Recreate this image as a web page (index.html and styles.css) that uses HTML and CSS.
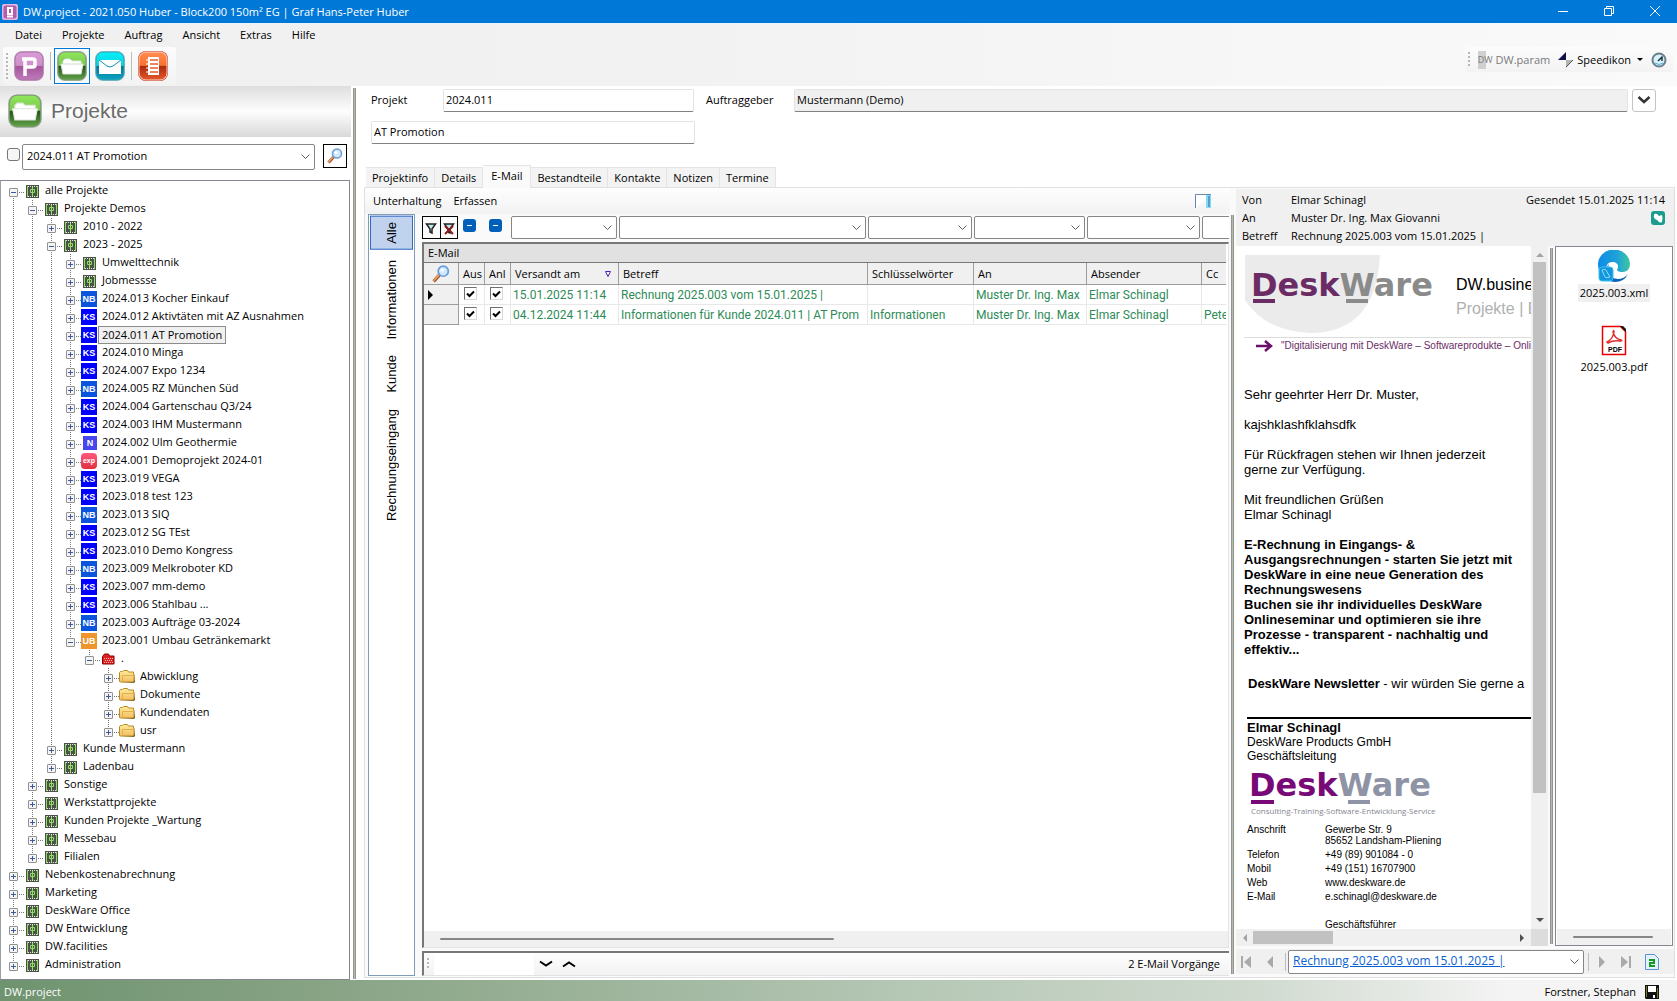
FILE: index.html
```html
<!DOCTYPE html>
<html lang="de">
<head>
<meta charset="utf-8">
<title>DW.project</title>
<link rel="stylesheet" href="styles.css">
</head>
<body>
<svg class="defs" aria-hidden="true">
  <defs>
    <linearGradient id="gGreen" x1="0" y1="0" x2="0" y2="1"><stop offset="0" stop-color="#8fe85a"/><stop offset=".48" stop-color="#7cc653"/><stop offset=".5" stop-color="#24501c"/><stop offset="1" stop-color="#62a548"/></linearGradient>
    <linearGradient id="gPink" x1="0" y1="0" x2="0" y2="1"><stop offset="0" stop-color="#d99bd6"/><stop offset=".48" stop-color="#cf8fcb"/><stop offset=".5" stop-color="#a3559c"/><stop offset="1" stop-color="#bf7ab9"/></linearGradient>
    <linearGradient id="gCyan" x1="0" y1="0" x2="0" y2="1"><stop offset="0" stop-color="#04f0f8"/><stop offset=".48" stop-color="#0cd4e4"/><stop offset=".5" stop-color="#04738f"/><stop offset="1" stop-color="#08a5c4"/></linearGradient>
    <linearGradient id="gOrange" x1="0" y1="0" x2="0" y2="1"><stop offset="0" stop-color="#ff8e50"/><stop offset=".48" stop-color="#f8702f"/><stop offset=".5" stop-color="#a82a0c"/><stop offset="1" stop-color="#e5592c"/></linearGradient>
    <linearGradient id="gFolder" x1="0" y1="0" x2="0" y2="1"><stop offset="0" stop-color="#fdeb9a"/><stop offset="1" stop-color="#f3bd63"/></linearGradient>
    <linearGradient id="gEdge" x1="0" y1="0" x2="1" y2="0"><stop offset="0" stop-color="#0c8be8"/><stop offset=".6" stop-color="#1fa3d8"/><stop offset="1" stop-color="#3fc6a0"/></linearGradient>
  </defs>
  <symbol id="bin" viewBox="0 0 16 16"><path fill="#4f4f4f" d="M2 2h13v13H2z"/><path fill="none" stroke="#d8f5c8" stroke-dasharray="1 1" d="M4 3.500h10M4 13.500h10"/><path fill="none" stroke="#8be35c" d="M3.500 3v11M13.500 3v11M8.500 4v9M6.500 6.500h4v3h-4z"/></symbol>
  <symbol id="folder" viewBox="0 0 16 16"><path fill="#5f4a14" d="M2 14h12.500l1.500-1V5l-1 8z"/><path fill="url(#gFolder)" stroke="#b98a22" d="M.5 12.500v-9l1-1h2l1-1h4l1 1.500h5v2h.5v7l-1 1H1.500z"/><path stroke="#e0b04a" fill="none" d="M3.500 12V6.500h11"/></symbol>
  <symbol id="redfolder" viewBox="0 0 16 16"><path fill="#e02020" stroke="#8c0000" d="M2.500 13V5.500L4.500 3h4l1 2h4.500v8z"/><path stroke="#fbb" stroke-dasharray="1 1" d="M4 7.500h9M5 9.500h8M4 11.500h9"/></symbol>
  <symbol id="appfolder" viewBox="0 0 32 32"><rect x="1" y="1" width="30" height="30" rx="8" fill="#b5bdb2"/><rect x="2" y="2" width="28" height="28" rx="7" fill="url(#gGreen)" stroke="#7d9a74"/><path fill="#fff" d="M7 13v-2l2-2h5l2 2h9v3H8zM5 14h22l-2 10H7z" stroke="#dfe8dc"/></symbol>
  <symbol id="lens" viewBox="0 0 16 16"><path d="M1.500 14.500l5-5.500" stroke="#a0502a" stroke-width="3"/><path d="M1.500 14l4.500-5" stroke="#f0a55a" stroke-width="1.500"/><circle cx="10" cy="5.500" r="4.500" fill="#cfeafd" stroke="#6b9bd8" stroke-width="1.500"/><circle cx="9" cy="4.500" r="1.500" fill="#fff"/></symbol>
</svg>

<header class="titlebar">
  <svg class="appicon" viewBox="0 0 16 16"><rect width="16" height="16" rx="2" fill="#e3b7e0"/><rect x="1.500" y="1.500" width="13" height="13" rx="2" fill="#b25fab"/><path fill="none" stroke="#fff" stroke-width="2" d="M6 4h4v6H6zM5 12.500h6"/></svg>
  <h1>DW.project - 2021.050 Huber - Block200 150m² EG | Graf Hans-Peter Huber</h1>
  <div class="winbtns">
    <button aria-label="Minimieren"><svg viewBox="0 0 10 10"><path d="M0 5.500h10"/></svg></button>
    <button aria-label="Wiederherstellen"><svg viewBox="0 0 10 10"><path d="M.5 2.500h7v7h-7zM2.500 2.500v-2h7v7h-2"/></svg></button>
    <button aria-label="Schließen"><svg viewBox="0 0 10 10"><path d="M0 0l10 10M10 0L0 10"/></svg></button>
  </div>
</header>

<div class="topbars">
  <nav class="menu"><button>Datei</button><button>Projekte</button><button>Auftrag</button><button>Ansicht</button><button>Extras</button><button>Hilfe</button></nav>
  <div class="toolrow">
    <div class="strip">
      <i class="grip"></i>
      <button class="tool" aria-label="Projekt"><svg viewBox="0 0 32 32"><rect x="1" y="1" width="30" height="30" rx="8" fill="#cbb4ca"/><rect x="2" y="2" width="28" height="28" rx="7" fill="url(#gPink)" stroke="#a873a4"/><path fill="none" stroke="#fff" stroke-width="3.500" d="M9 9h11q2 0 2 2v4q0 2-2 2h-7M12 8v18"/></svg></button>
      <i class="sep"></i>
      <button class="tool on" aria-label="Projekte"><svg><use href="#appfolder"/></svg></button>
      <button class="tool" aria-label="E-Mail"><svg viewBox="0 0 32 32"><rect x="1" y="1" width="30" height="30" rx="8" fill="#a7c8cf"/><rect x="2" y="2" width="28" height="28" rx="7" fill="url(#gCyan)" stroke="#3da0b0"/><path fill="#fff" d="M5 10h22v14H5z"/><path fill="none" stroke="#0a93ab" d="M5 10l8 6q3 2 6 0l8-6"/></svg></button>
      <i class="sep"></i>
      <button class="tool" aria-label="Liste"><svg viewBox="0 0 32 32"><rect x="1" y="1" width="30" height="30" rx="8" fill="#c0392b"/><rect x="2" y="2" width="28" height="28" rx="7" fill="url(#gOrange)" stroke="#ffd5c4"/><path fill="#fff" d="M11 7h11v18H11z"/><path stroke="#e5592c" stroke-width="1.500" d="M13 10h8M13 14h8M13 18h8M13 22h8"/><path stroke="#fff" d="M9 10h3M9 14h3M9 18h3M9 22h3"/></svg></button>
    </div>
    <div class="strip right">
      <i class="grip"></i>
      <button class="txt dim"><b class="dwmini">DW</b>DW.param</button>
      <button class="txt"><svg viewBox="0 0 16 16"><path fill="#10104a" d="M0 8L8 0v8z"/><path fill="#b5b5b5" d="M8 8h7l-7 8z"/><path stroke="#555" d="M15 8l-7 7"/></svg>Speedikon<i class="caret"></i></button>
      <button class="txt" aria-label="Uhr"><svg viewBox="0 0 16 16"><circle cx="8" cy="8" r="6.500" fill="#d9f1fb" stroke="#6c7f8c" stroke-width="2"/><path stroke="#234" stroke-width="1.500" fill="none" d="M7 9l4.500-4.500M11 5v4"/><path stroke="#4ab4dc" d="M4 11q4 3 8 0" fill="none"/></svg></button>
    </div>
  </div>
</div>

<div class="body">
<aside class="side">
  <div class="sidehead"><svg><use href="#appfolder"/></svg><h2>Projekte</h2></div>
  <div class="search">
    <input type="checkbox" aria-label="Filter aktiv">
    <select aria-label="Projekt wählen"><option>2024.011 AT Promotion</option></select>
    <button class="boxbtn" aria-label="Suchen"><svg><use href="#lens"/></svg></button>
  </div>
  <ul class="tree">
    <li><div class="row"><button class="tg open" aria-label="Zuklappen"></button><svg><use href="#bin"/></svg><span>alle Projekte</span></div>
      <ul>
        <li><div class="row"><button class="tg open" aria-label="Zuklappen"></button><svg><use href="#bin"/></svg><span>Projekte Demos</span></div>
          <ul>
            <li><div class="row"><button class="tg" aria-label="Aufklappen"></button><svg><use href="#bin"/></svg><span>2010 - 2022</span></div></li>
            <li><div class="row"><button class="tg open" aria-label="Zuklappen"></button><svg><use href="#bin"/></svg><span>2023 - 2025</span></div>
              <ul>
                <li><div class="row"><button class="tg" aria-label="Aufklappen"></button><svg><use href="#bin"/></svg><span>Umwelttechnik</span></div></li>
                <li><div class="row"><button class="tg" aria-label="Aufklappen"></button><svg><use href="#bin"/></svg><span>Jobmessse</span></div></li>
                <li><div class="row"><button class="tg" aria-label="Aufklappen"></button><b class="nb">NB</b><span>2024.013 Kocher Einkauf</span></div></li>
                <li><div class="row"><button class="tg" aria-label="Aufklappen"></button><b class="ks">KS</b><span>2024.012 Aktivtäten mit AZ Ausnahmen</span></div></li>
                <li><div class="row"><button class="tg" aria-label="Aufklappen"></button><b class="ks">KS</b><span class="sel">2024.011 AT Promotion</span></div></li>
                <li><div class="row"><button class="tg" aria-label="Aufklappen"></button><b class="ks">KS</b><span>2024.010 Minga</span></div></li>
                <li><div class="row"><button class="tg" aria-label="Aufklappen"></button><b class="ks">KS</b><span>2024.007 Expo 1234</span></div></li>
                <li><div class="row"><button class="tg" aria-label="Aufklappen"></button><b class="nb">NB</b><span>2024.005 RZ München Süd</span></div></li>
                <li><div class="row"><button class="tg" aria-label="Aufklappen"></button><b class="ks">KS</b><span>2024.004 Gartenschau Q3/24</span></div></li>
                <li><div class="row"><button class="tg" aria-label="Aufklappen"></button><b class="ks">KS</b><span>2024.003 IHM Mustermann</span></div></li>
                <li><div class="row"><button class="tg" aria-label="Aufklappen"></button><b class="n">N</b><span>2024.002 Ulm Geothermie</span></div></li>
                <li><div class="row"><button class="tg" aria-label="Aufklappen"></button><b class="exp">exp</b><span>2024.001 Demoprojekt 2024-01</span></div></li>
                <li><div class="row"><button class="tg" aria-label="Aufklappen"></button><b class="ks">KS</b><span>2023.019 VEGA</span></div></li>
                <li><div class="row"><button class="tg" aria-label="Aufklappen"></button><b class="ks">KS</b><span>2023.018 test 123</span></div></li>
                <li><div class="row"><button class="tg" aria-label="Aufklappen"></button><b class="nb">NB</b><span>2023.013 SIQ</span></div></li>
                <li><div class="row"><button class="tg" aria-label="Aufklappen"></button><b class="ks">KS</b><span>2023.012 SG TEst</span></div></li>
                <li><div class="row"><button class="tg" aria-label="Aufklappen"></button><b class="ks">KS</b><span>2023.010 Demo Kongress</span></div></li>
                <li><div class="row"><button class="tg" aria-label="Aufklappen"></button><b class="nb">NB</b><span>2023.009 Melkroboter KD</span></div></li>
                <li><div class="row"><button class="tg" aria-label="Aufklappen"></button><b class="ks">KS</b><span>2023.007 mm-demo</span></div></li>
                <li><div class="row"><button class="tg" aria-label="Aufklappen"></button><b class="ks">KS</b><span>2023.006 Stahlbau ...</span></div></li>
                <li><div class="row"><button class="tg" aria-label="Aufklappen"></button><b class="nb">NB</b><span>2023.003 Aufträge 03-2024</span></div></li>
                <li><div class="row"><button class="tg open" aria-label="Zuklappen"></button><b class="ub">UB</b><span>2023.001 Umbau Getränkemarkt</span></div>
                  <ul>
                    <li><div class="row"><button class="tg open" aria-label="Zuklappen"></button><svg><use href="#redfolder"/></svg><span>.</span></div>
                      <ul>
                        <li><div class="row"><button class="tg" aria-label="Aufklappen"></button><svg><use href="#folder"/></svg><span>Abwicklung</span></div></li>
                        <li><div class="row"><button class="tg" aria-label="Aufklappen"></button><svg><use href="#folder"/></svg><span>Dokumente</span></div></li>
                        <li><div class="row"><button class="tg" aria-label="Aufklappen"></button><svg><use href="#folder"/></svg><span>Kundendaten</span></div></li>
                        <li><div class="row"><button class="tg" aria-label="Aufklappen"></button><svg><use href="#folder"/></svg><span>usr</span></div></li>
                      </ul>
                    </li>
                  </ul>
                </li>
              </ul>
            </li>
            <li><div class="row"><button class="tg" aria-label="Aufklappen"></button><svg><use href="#bin"/></svg><span>Kunde Mustermann</span></div></li>
            <li><div class="row"><button class="tg" aria-label="Aufklappen"></button><svg><use href="#bin"/></svg><span>Ladenbau</span></div></li>
          </ul>
        </li>
        <li><div class="row"><button class="tg" aria-label="Aufklappen"></button><svg><use href="#bin"/></svg><span>Sonstige</span></div></li>
        <li><div class="row"><button class="tg" aria-label="Aufklappen"></button><svg><use href="#bin"/></svg><span>Werkstattprojekte</span></div></li>
        <li><div class="row"><button class="tg" aria-label="Aufklappen"></button><svg><use href="#bin"/></svg><span>Kunden Projekte _Wartung</span></div></li>
        <li><div class="row"><button class="tg" aria-label="Aufklappen"></button><svg><use href="#bin"/></svg><span>Messebau</span></div></li>
        <li><div class="row"><button class="tg" aria-label="Aufklappen"></button><svg><use href="#bin"/></svg><span>Filialen</span></div></li>
      </ul>
    </li>
    <li><div class="row"><button class="tg" aria-label="Aufklappen"></button><svg><use href="#bin"/></svg><span>Nebenkostenabrechnung</span></div></li>
    <li><div class="row"><button class="tg" aria-label="Aufklappen"></button><svg><use href="#bin"/></svg><span>Marketing</span></div></li>
    <li><div class="row"><button class="tg" aria-label="Aufklappen"></button><svg><use href="#bin"/></svg><span>DeskWare Office</span></div></li>
    <li><div class="row"><button class="tg" aria-label="Aufklappen"></button><svg><use href="#bin"/></svg><span>DW Entwicklung</span></div></li>
    <li><div class="row"><button class="tg" aria-label="Aufklappen"></button><svg><use href="#bin"/></svg><span>DW.facilities</span></div></li>
    <li><div class="row"><button class="tg" aria-label="Aufklappen"></button><svg><use href="#bin"/></svg><span>Administration</span></div></li>
  </ul>
</aside>
<div class="split"></div>

<main class="main">
  <div class="fields">
    <label for="prj">Projekt</label><input id="prj" class="field no" value="2024.011">
    <label for="auf" class="lauf">Auftraggeber</label><input id="auf" class="field wide" value="Mustermann (Demo)" readonly>
    <button class="drop" aria-label="Mehr"><svg viewBox="0 0 14 10"><path d="M1.500 2l5.500 5 5.500-5" fill="none" stroke="#333" stroke-width="2.500"/></svg></button>
  </div>
  <div class="fields second"><input class="field name" aria-label="Projektname" value="AT Promotion"></div>
  <div class="tabs"><button>Projektinfo</button><button>Details</button><button class="on">E-Mail</button><button>Bestandteile</button><button>Kontakte</button><button>Notizen</button><button>Termine</button></div>

  <div class="panel">
    <section class="work">
      <div class="wbar"><button>Unterhaltung</button><button>Erfassen</button>
        <button class="layout" aria-label="Vorschau"><svg viewBox="0 0 16 14"><path fill="#fff" stroke="#6787ad" d="M.5 14V.5H16"/><path fill="#7fdcf4" d="M11 1h5v13h-5z"/><path fill="#5b9ccc" d="M13 2h2v11h-2z"/></svg></button>
      </div>
      <div class="wbody">
        <div class="vtabs"><button class="on">Alle</button><button>Informationen</button><button>Kunde</button><button>Rechnungseingang</button></div>
        <div class="list">
          <div class="filters">
            <div class="fbtns">
              <button aria-label="Filtern"><svg viewBox="0 0 12 14"><path d="M1.500 3h9L7 8v4l-2-1V8z" fill="#bfeaea" stroke="#222" stroke-width="1.500"/></svg></button>
              <button aria-label="Filter löschen"><svg viewBox="0 0 12 14"><path d="M1.500 3h9L7 8v4l-2-1V8z" fill="#bfeaea" stroke="#222" stroke-width="1.500"/><path d="M2 5l8 8M10 5l-8 8" stroke="#8b1a1a" stroke-width="2"/></svg></button>
            </div>
            <button class="tri" aria-label="Ausgang"></button><button class="tri" aria-label="Anlage"></button>
            <select aria-label="Versandt am"></select><select aria-label="Betreff"></select><select aria-label="Schlüsselwörter"></select><select aria-label="An"></select><select aria-label="Absender"></select><select aria-label="Cc"></select>
          </div>
          <div class="grid">
            <table>
              <caption>E-Mail</caption>
              <colgroup><col class="c0"><col class="c1"><col class="c1"><col class="c3"><col class="c4"><col class="c5"><col class="c6"><col class="c7"><col class="c8"></colgroup>
              <thead><tr><th class="find"><svg><use href="#lens"/></svg></th><th>Aus</th><th>Anl</th><th>Versandt am<svg class="sort" viewBox="0 0 6 8"><path d="M.5 1.500h5L3 6.500z" fill="#fff" stroke="#4b1fa8"/></svg></th><th>Betreff</th><th>Schlüsselwörter</th><th>An</th><th>Absender</th><th>Cc</th></tr></thead>
              <tbody>
                <tr><th><i class="cur"></i></th><td class="ck"><input type="checkbox" checked aria-label="Ausgang"></td><td class="ck"><input type="checkbox" checked aria-label="Anlage"></td><td>15.01.2025 11:14</td><td>Rechnung 2025.003 vom 15.01.2025 |</td><td></td><td>Muster Dr. Ing. Max</td><td>Elmar Schinagl</td><td></td></tr>
                <tr><th></th><td class="ck"><input type="checkbox" checked aria-label="Ausgang"></td><td class="ck"><input type="checkbox" checked aria-label="Anlage"></td><td>04.12.2024 11:44</td><td>Informationen für Kunde 2024.011 | AT Prom</td><td>Informationen</td><td>Muster Dr. Ing. Max</td><td>Elmar Schinagl</td><td>Pete</td></tr>
              </tbody>
            </table>
            <div class="thinbar"><i></i></div>
          </div>
          <div class="lfoot">
            <i class="grip"></i><input aria-label="Suchen">
            <button aria-label="Weiter"><svg viewBox="0 0 14 8"><path d="M1 1.500l6 4 6-4"/></svg></button>
            <button aria-label="Zurück"><svg viewBox="0 0 14 8"><path d="M1 6.500l6-4 6 4"/></svg></button>
            <output>2 E-Mail Vorgänge</output>
          </div>
        </div>
      </div>
    </section>
    <div class="split"></div>

    <section class="preview">
      <dl class="mhead">
        <div><dt>Von</dt><dd>Elmar Schinagl</dd><dd class="end">Gesendet 15.01.2025 11:14</dd></div>
        <div><dt>An</dt><dd>Muster Dr. Ing. Max Giovanni</dd><dd class="end"><svg viewBox="0 0 14 14"><rect width="14" height="14" rx="3" fill="#1b9c8e"/><path fill="#fff" d="M3 4q0-2 3-1l2 2 3-1q1 3 0 7-2 1-3 0L6 9 4 8Q2 6 3 4z"/></svg></dd></div>
        <div><dt>Betreff</dt><dd>Rechnung 2025.003 vom 15.01.2025 |</dd></div>
      </dl>
      <div class="pbody">
        <div class="browser">
          <article class="mail">
            <div class="banner">
              <svg class="brand" viewBox="0 0 190 80"><path fill="#ebebeb" d="M0 0h135q-4 78-70 78Q20 76 0 45z"/><text x="6" y="41" class="lt"><tspan fill="#6b2c66">Desk</tspan><tspan fill="#8a8a8a">Ware</tspan></text><path fill="#6b2c66" d="M8 44h22v4H8z"/><path fill="#8a8a8a" d="M101 44h22v4h-22z"/></svg>
              <div class="claim"><p>DW.busine</p><p class="dim">Projekte | B</p></div>
            </div>
            <p class="slogan"><svg viewBox="0 0 18 12"><path d="M1 6h14M10 1l6 5-6 5" fill="none" stroke="#6b0f6b" stroke-width="2.500"/></svg>"Digitalisierung mit DeskWare – Softwareprodukte – Onlin</p>
            <p>Sehr geehrter Herr Dr. Muster,</p>
            <p>kajshklashfklahsdfk</p>
            <p>Für Rückfragen stehen wir Ihnen jederzeit<br>gerne zur Verfügung.</p>
            <p>Mit freundlichen Grüßen<br>Elmar Schinagl</p>
            <p><b>E-Rechnung in Eingangs- &amp;<br>Ausgangsrechnungen - starten Sie jetzt mit<br>DeskWare in eine neue Generation des<br>Rechnungswesens<br>Buchen sie ihr individuelles DeskWare<br>Onlineseminar und optimieren sie ihre<br>Prozesse - transparent - nachhaltig und<br>effektiv...</b></p>
            <p class="news"><b>DeskWare Newsletter</b> - wir würden Sie gerne a</p>
            <div class="sign">
              <b>Elmar Schinagl</b>
              <span>DeskWare Products GmbH</span>
              <span>Geschäftsleitung</span>
              <svg class="brand2" viewBox="0 0 190 50"><text x="2" y="26" class="lt"><tspan fill="#780a78">Desk</tspan><tspan fill="#8f93a6">Ware</tspan></text><path fill="#780a78" d="M4 30h23v4H4z"/><path fill="#8f93a6" d="M101 30h22v4h-22z"/><text x="4" y="44" class="tag">Consulting-Training-Software-Entwicklung-Service</text></svg>
              <dl>
                <dt>Anschrift</dt><dd>Gewerbe Str. 9<br>85652 Landsham-Pliening</dd>
                <dt>Telefon</dt><dd>+49 (89) 901084 - 0</dd>
                <dt>Mobil</dt><dd>+49 (151) 16707900</dd>
                <dt>Web</dt><dd>www.deskware.de</dd>
                <dt>E-Mail</dt><dd>e.schinagl@deskware.de</dd>
                <dd class="gf">Geschäftsführer</dd>
              </dl>
            </div>
          </article>
          <div class="vbar"><i class="up"></i><i class="thumb"></i><i class="down"></i></div>
          <div class="hbar"><i class="left"></i><i class="thumb"></i><i class="rgt"></i></div>
          <div class="corner"></div>
        </div>
        <div class="split"></div>
        <div class="files">
          <a href="#xml"><svg viewBox="0 0 32 32"><path fill="url(#gEdge)" d="M0 15A16 15 0 0 1 32 14q0 7-7 8-5 0-6-2 3-6-3-8-8-1-8 8 1 8 9 12Q1 31 0 15z"/><path fill="#0d62b8" d="M11 14q-5 14 9 15 6 0 10-5-4 8-13 8-9-1-9-10 0-5 3-8z"/><rect x="1" y="17" width="14" height="14" rx="3" fill="#1496dc" stroke="#39c0f0"/><path fill="none" stroke="#8be0ff" d="M4 20q4-2 5 2l3 5q-5 2-6-2z"/></svg><span class="on">2025.003.xml</span></a>
          <a href="#pdf"><svg viewBox="0 0 32 32"><path fill="#fff" stroke="#e60000" stroke-width="1.500" d="M4.500 2.500h18l5 5v23h-23z"/><path fill="#111" d="M22 2l6 6v-3l-3-3z"/><path fill="none" stroke="#e03030" stroke-width="1.500" d="M9 18q6-3 7-10 0-3-1 0 2 7 8 8 2 1-1 1-7-1-12 2z"/><text x="10" y="28" class="pdf">PDF</text></svg><span>2025.003.pdf</span></a>
          <div class="thinbar"><i></i></div>
        </div>
      </div>
      <div class="pnav">
        <button aria-label="Erste"><svg viewBox="0 0 10 12"><path d="M0 0h2v12H0zM10 0v12L3 6z"/></svg></button>
        <button aria-label="Vorige"><svg viewBox="0 0 10 12"><path d="M8 0v12L2 6z"/></svg></button>
        <i class="sep"></i>
        <select aria-label="Nachricht"><option>Rechnung 2025.003 vom 15.01.2025 |</option></select>
        <i class="sep"></i>
        <button aria-label="Nächste"><svg viewBox="0 0 10 12"><path d="M2 0v12l6-6z"/></svg></button>
        <button aria-label="Letzte"><svg viewBox="0 0 10 12"><path d="M0 0v12l7-6zM8 0h2v12H8z"/></svg></button>
        <button class="reload" aria-label="Aktualisieren"><svg viewBox="0 0 14 16"><path fill="#e4f1fd" stroke="#5b93d8" d="M.5.5h9l4 4v11H.5z"/><path fill="none" stroke="#159a1f" stroke-width="2" d="M4 6h5v3H5v3h5"/></svg></button>
      </div>
    </section>
  </div>
</main>
</div>

<footer class="status"><span>DW.project</span><span class="user">Forstner, Stephan</span><svg viewBox="0 0 14 14"><path fill="#111" d="M0 0h14v14H1l-1-1z"/><path fill="#fff" d="M3 1h8v6H3zM8 10h2v3H8z"/><path fill="#7a7a20" d="M1 1h1v11H1zM12 3h1v10h-1z"/></svg></footer>
</body>
</html>
```
FILE: styles.css
```css
* { box-sizing: border-box; }
body {
  margin: 0;
  height: 100vh;
  display: flex;
  flex-direction: column;
  overflow: hidden;
  background: #fff;
  color: #000;
  font: 11px/18px "Open Sans", "Noto Sans", sans-serif;
}
button, input, select { font: inherit; color: inherit; margin: 0; }
button { border: 0; background: none; padding: 0; white-space: nowrap; }
h1, h2, p, ul, dl, dd { margin: 0; padding: 0; font-weight: normal; }
ul { list-style: none; }
svg { display: block; flex: none; }
.defs { position: absolute; width: 0; height: 0; }

select {
  appearance: none;
  min-width: 0;
  border: 1px solid #868686;
  border-radius: 2px;
  padding: 0 20px 2px 4px;
  background: #fff url("data:image/svg+xml,%3Csvg xmlns='http://www.w3.org/2000/svg' width='9' height='6'%3E%3Cpath d='M.5.5l4 4 4-4' fill='none' stroke='%23606060'/%3E%3C/svg%3E") no-repeat right 4px center;
}
.split {
  flex: none;
  width: 3px;
  margin: 2px 2px 4px;
  background: #b4bab0;
  border: solid #90958e;
  border-width: 0 1px;
}
.grip {
  width: 2px;
  height: 26px;
  background: repeating-linear-gradient(#b8b8b8 0 2px, transparent 2px 4px);
}
.sep { width: 1px; height: 28px; background: #bdbdbd; }

/* title bar */
.titlebar {
  flex: none;
  display: flex;
  align-items: center;
  height: 23px;
  padding-left: 2px;
  gap: 5px;
  background: #0078d7;
  color: #fff;
}
.titlebar h1 { font-size: 11px; flex: 1; }
.appicon { width: 16px; height: 16px; }
.winbtns { display: flex; margin-right: -1px; }
.winbtns button { width: 46px; height: 23px; padding-bottom: 2px; display: grid; place-items: center; }
.winbtns svg { width: 10px; height: 10px; fill: none; stroke: #fff; overflow: visible; }

/* menu and toolbars */
.topbars {
  flex: none;
  height: 63px;
  background: linear-gradient(90deg, #f0f0f0, #f2f2f2 40%, #fafafa);
}
.menu { display: flex; height: 24px; padding-left: 15px; gap: 20px; }
.toolrow { display: flex; justify-content: space-between; align-items: flex-start; padding: 0 4px 0 3px; }
.strip {
  display: flex;
  align-items: center;
  gap: 4px;
  height: 38px;
  padding: 0 6px 0 3px;
  border-radius: 3px;
  background: linear-gradient(#fcfcfc, #f3f3f3);
}
.tool { width: 36px; height: 36px; display: grid; place-items: center; border: 1px solid transparent; margin: 0 -1px; }
.tool.on { border-color: #0078d7; background: #f7fbff; }
.tool svg { width: 32px; height: 32px; }
.strip.right { height: 25px; gap: 8px; }
.strip.right .grip { height: 15px; }
.txt { display: flex; align-items: center; gap: 3px; }
.txt svg { width: 16px; height: 16px; }
.dim { color: #7a7a7a; }
.dwmini { font-size: 9px; font-weight: normal; background: linear-gradient(90deg, #d0d0d0 50%, transparent 50%); }
.caret { border: 3px solid transparent; border-top-color: #000; border-bottom: 0; margin-left: 3px; }

.body { flex: 1; min-height: 0; display: flex; }

/* project tree */
.side { width: 351px; flex: none; display: flex; flex-direction: column; }
.sidehead {
  flex: none;
  display: flex;
  align-items: center;
  gap: 8px;
  height: 51px;
  padding: 0 0 2px 7px;
  background: linear-gradient(#dedede, #fdfdfd 50%, #d9d9d9);
}
.sidehead svg { width: 36px; height: 36px; }
.sidehead h2 { font: 21px/24px "Liberation Sans", Arial, sans-serif; color: #6b6b6b; }
.search { display: flex; align-items: flex-start; padding: 7px 4px 10px 7px; }
.search input { appearance: none; width: 13px; height: 13px; margin: 4px 2px 0 0; border: 1px solid #767676; border-radius: 3px; background: #f6f6f6; }
.search select { flex: 1; height: 26px; margin-right: 8px; }
.boxbtn { width: 24px; height: 24px; display: grid; place-items: center; border: 1px solid #000; }
.boxbtn svg { width: 16px; height: 16px; }
.tree {
  flex: 1;
  min-height: 0;
  overflow: hidden;
  margin-right: 1px;
  padding-top: 1px;
  border: 1px solid #828790;
  border-left-color: #9a9ea6;
}
.tree ul { margin-left: 19px; }
.tree li {
  background: repeating-linear-gradient(#777 0 1px, transparent 1px 2px) 12px 0 / 1px 100% no-repeat;
}
.tree li:last-child { background-size: 1px 10px; }
.tree > li:first-child { background-position: 12px 10px; }
.row {
  display: flex;
  align-items: center;
  height: 18px;
  padding-left: 8px;
  background: repeating-linear-gradient(90deg, #777 0 1px, transparent 1px 2px) 18px 10px / 6px 1px no-repeat;
}
.tg {
  flex: none;
  width: 9px;
  height: 9px;
  margin: 3px 6px 0 0;
  border: 1px solid #919191;
  border-radius: 1px;
  background:
    linear-gradient(#3c5a9c, #3c5a9c) center / 5px 1px no-repeat,
    linear-gradient(#3c5a9c, #3c5a9c) center / 1px 5px no-repeat,
    #f4f4f4;
}
.tg.open { background: linear-gradient(#3c5a9c, #3c5a9c) center / 5px 1px no-repeat, #f4f4f4; }
.row svg, .row b { width: 16px; height: 16px; }
.row b { flex: none; color: #fff; font: bold 9px/17px "Liberation Sans", Arial, sans-serif; text-align: center; }
.nb { background: #0a55dc; }
.ks { background: #0000ff; }
.row .n { width: 14px; height: 14px; margin: 0 0 0 2px; line-height: 15px; background: #4646ec; }
.row .exp { background: linear-gradient(#ff5a80, #e03040); border-radius: 4px; font-size: 7px; line-height: 15px; }
.ub { background: #ee962c; }
.row span { padding: 0 3px; margin-left: 1px; line-height: 16px; border: 1px solid transparent; margin-top: -2px; white-space: nowrap; }
.row .sel { border-color: #8c8c8c; background: #f0f0f0; margin-top: 0; }

/* main area */
.main { flex: 1; min-width: 0; display: flex; flex-direction: column; padding: 2px 2px 2px 5px; }
.body > .split { margin-bottom: 1px; }
.fields { display: flex; align-items: center; height: 24px; padding: 0 19px 0 8px; }
.fields.second { margin-top: 7px; margin-bottom: 19px; height: 26px; }
.fields label { width: 72px; }
.fields .lauf { width: 88px; margin-left: 12px; }
.field { height: 23px; border: 1px solid #e3e3e3; border-bottom-color: #808080; border-radius: 2px; padding: 0 2px 2px; background: #fff; }
.no { width: 251px; }
.name { width: 324px; }
.wide { flex: 1; min-width: 0; background: #f0f0f0; }
.drop { width: 24px; height: 23px; margin-left: 4px; display: grid; place-items: center; border: 1px solid #c4c4c4; border-radius: 3px; }
.drop svg { width: 14px; height: 10px; }
.tabs { display: flex; align-items: flex-end; padding-left: 3px; height: 23px; }
.tabs button { height: 20px; padding: 0 6px; line-height: 20px; background: #f3f3f3; border: 1px solid #e4e4e4; border-width: 1px 1px 0 0; }
.tabs .on { height: 23px; line-height: 18px; padding: 0 8px 3px; background: #fafafa; margin-bottom: -1px; position: relative; }
.panel { flex: 1; min-height: 0; display: flex; border: 1px solid #e0e0e0; margin-left: 1px; background: #fafafa; }
.work { flex: 1; min-width: 0; display: flex; flex-direction: column; }
.wbar { flex: none; display: flex; gap: 12px; height: 26px; padding: 0 19px 0 8px; align-items: center; background: linear-gradient(#fefefe, #f2f2f2); }
.layout { margin-left: auto; }
.layout svg { width: 16px; height: 14px; }
.wbody { flex: 1; min-height: 0; display: flex; padding: 0 1px 1px 3px; gap: 7px; }
.vtabs { width: 47px; flex: none; padding: 1px; display: flex; flex-direction: column; gap: 4px; border: 1px solid #7f9db9; background: #fff; }
.vtabs button { writing-mode: vertical-rl; transform: rotate(180deg); padding: 6px 0; width: 43px; font: 13px/43px "Liberation Sans", Arial, sans-serif; border: 0 solid #316ac5; }
.vtabs .on { background: #c1d2ee; border-width: 1px; padding: 5px 0; line-height: 41px; }
.list { flex: 1; min-width: 0; display: flex; flex-direction: column; gap: 2px; }
.filters {
  flex: none;
  display: grid;
  grid-template-columns: 36px 24px 23px 106px 247px 104px 111px 113px 110px;
  column-gap: 2px;
  height: 26px;
  padding-top: 2px;
  overflow: hidden;
}
.filters .tri { margin: 3px 0 0 3px; width: 13px; height: 13px; border-radius: 3px; background: linear-gradient(#fff, #fff) center / 5px 1px no-repeat #005fb8; }
.filters select { height: 23px; }
.fbtns { display: flex; height: 23px; }
.fbtns button { flex: 1; border: 1px solid #000; display: grid; place-items: center; }
.fbtns button + button { border-left: 0; }
.fbtns svg { width: 12px; height: 14px; }

/* e-mail grid */
.grid { flex: 1; min-height: 0; display: flex; flex-direction: column; justify-content: space-between; overflow: hidden; background: #fff; border: 2px solid #777; border-width: 2px 1px 1px 2px; border-right-color: #e3e3e3; border-bottom-color: #e3e3e3; }
table { table-layout: fixed; width: 802px; border-collapse: separate; border-spacing: 0; }
.c0 { width: 35px; } .c1 { width: 26px; } .c3 { width: 108px; } .c4 { width: 249px; }
.c5 { width: 106px; } .c6 { width: 113px; } .c7 { width: 115px; } .c8 { width: 24px; }
caption { height: 19px; padding-left: 4px; text-align: left; background: #e1e1e1; border-bottom: 1px solid #777; }
thead th { height: 22px; padding: 0 0 0 4px; font-weight: normal; text-align: left; white-space: nowrap; overflow: hidden; background: #f0f0f0; border: solid #9d9d9d; border-width: 0 1px 1px 0; }
thead th:last-child, tbody td:last-child { border-right: 0; }
.find { padding-left: 8px; }
thead .find svg { width: 18px; height: 18px; }
.sort { display: inline; width: 6px; height: 8px; margin-left: 25px; }
tbody td { height: 20px; padding: 2px 0 0 2px; font: 12px/17px Roboto, "Open Sans", sans-serif; color: #2e8b57; white-space: nowrap; overflow: hidden; border: solid #e8e8e8; border-width: 0 1px 1px 0; }
tbody th { padding: 0; background: #f0f0f0; border: solid #9d9d9d; border-width: 0 1px 1px 0; }
.cur { display: block; width: 5px; margin-left: 4px; border: 5px solid transparent; border-left-color: #000; border-right: 0; }
tbody .ck { padding: 0 0 0 5px; line-height: 0; vertical-align: top; }
.ck input {
  appearance: none;
  width: 13px;
  height: 13px;
  margin-top: 2px;
  border: 1px solid #d8d8d8;
  border-top-color: #707070;
  border-left-color: #707070;
  background: #fff url("data:image/svg+xml,%3Csvg xmlns='http://www.w3.org/2000/svg' width='9' height='8'%3E%3Cpath d='M1 3.500l2.500 2.500 4.500-4.500' fill='none' stroke='black' stroke-width='2'/%3E%3C/svg%3E") no-repeat center;
}
.thinbar { flex: none; height: 16px; padding: 7px 16px; background: #f0f0f0; }
.thinbar i { display: block; height: 2px; width: 51%; background: #868686; border-radius: 1px; }
.lfoot { flex: none; display: flex; align-items: center; height: 25px; margin-top: 1px; padding: 0 9px 0 3px; gap: 5px; border: 2px solid #777; border-width: 2px 0 1px 2px; border-bottom-color: #e3e3e3; background: linear-gradient(#fdfdfd, #f2f2f2); }
.lfoot .grip { height: 12px; }
.lfoot input { width: 100px; height: 22px; border: 0; background: #fff; }
.lfoot button + button { margin-left: 4px; }
.lfoot svg { width: 14px; height: 8px; fill: none; stroke: #000; stroke-width: 2; }
.lfoot output { margin-left: auto; }
.panel > .split { margin: 27px 2px 3px 1px; }

/* message preview */
.preview { width: 438px; flex: none; display: flex; flex-direction: column; gap: 3px; margin-top: 1px; }
.mhead { flex: none; height: 57px; padding: 2px 9px 0 6px; background: #f0f0f0; }
.mhead div { display: flex; height: 18px; align-items: center; }
.mhead dt { width: 49px; }
.mhead .end { margin-left: auto; }
.mhead svg { width: 14px; height: 14px; }
.pbody { flex: 1; min-height: 0; display: flex; margin-top: -3px; padding-right: 1px; }
.pbody > .split { margin-bottom: 2px; }
.browser { flex: 1; min-width: 0; display: grid; grid-template: minmax(0, 1fr) 17px / minmax(0, 1fr) 17px; background: #fff; }
.mail { overflow: hidden; padding: 9px 0 0 8px; white-space: nowrap; font: 13px/15px "Liberation Sans", Arial, sans-serif; }
.mail p { margin-bottom: 15px; }
.banner { display: flex; width: 600px; height: 83px; border-bottom: 1px solid #dcdcdc; }
.brand { width: 190px; height: 80px; margin-left: 1px; }
.lt { font: bold 32px "DejaVu Sans", sans-serif; }
.tag { font: 8px "Open Sans", sans-serif; fill: #85858f; }
.claim { padding: 18px 0 0 21px; }
.claim p { margin: 0; font-size: 16px; line-height: 24px; }
.claim .dim { color: #b0b0b0; }
.mail .slogan { display: flex; align-items: center; gap: 8px; padding-left: 11px; margin-bottom: 33px; font-size: 10px; line-height: 16px; color: #6b2c66; }
.slogan svg { width: 18px; height: 12px; }
.mail .news { margin: 19px 0 26px 4px; }
.sign { width: 600px; margin-left: 3px; padding-top: 1px; border-top: 2px solid #000; display: flex; flex-direction: column; font-size: 12px; line-height: 14px; }
.sign b { font-size: 13px; line-height: 15px; }
.brand2 { width: 190px; height: 50px; margin-top: 7px; overflow: visible; }
.sign dl { display: grid; grid-template-columns: 78px auto; row-gap: 3px; padding-top: 4px; font-size: 10px; line-height: 11px; }
.gf { grid-column: 2; margin-top: 14px; }
.vbar, .hbar { display: flex; align-items: center; background: #f0f0f0; }
.vbar { flex-direction: column; padding: 7px 0; }
.hbar { padding: 0 7px; }
.vbar .thumb { width: 13px; height: 531px; margin: 5px 0 auto; background: #c1c1c1; flex-shrink: 1; }
.hbar .thumb { width: 80px; height: 13px; margin: 0 auto 0 6px; background: #c1c1c1; }
.up, .down, .left, .rgt { border: 4px solid transparent; }
.up { border-top: 0; border-bottom-color: #a3a3a3; }
.down { border-bottom: 0; border-top-color: #505050; }
.left { border-left: 0; border-right-color: #a3a3a3; }
.rgt { border-right: 0; border-left-color: #505050; }
.corner { background: #dcdcdc; }
.files { width: 118px; flex: none; display: flex; flex-direction: column; align-items: center; gap: 22px; padding-top: 3px; border: 1px solid #828790; background: #fff; }
.files a { display: flex; flex-direction: column; align-items: center; gap: 2px; color: #000; text-decoration: none; }
.files a svg { width: 32px; height: 32px; }
.files a span { padding: 0 2px; }
.files .on { background: #f0f0f0; }
.pdf { font: bold 7px "Liberation Sans", Arial, sans-serif; }
.files .thinbar { align-self: stretch; margin: auto 1px 0; }
.files .thinbar i { width: 80px; }
.pnav { flex: none; display: flex; align-items: center; height: 25px; margin-bottom: 3px; padding: 0 15px 0 5px; background: #f0f0f0; border-radius: 3px; }
.pnav svg { width: 10px; height: 12px; fill: #a9a9a9; }
.pnav button { margin-right: 14px; }
.pnav .sep { height: 18px; margin-right: 2px; }
.pnav button + .sep { margin-left: -4px; }
.pnav .sep + button { margin-left: 6px; }
.pnav select { flex: 1; height: 24px; margin-right: 4px; font-size: 12px; color: #0a5fd0; text-decoration: underline; }
.pnav .reload { margin-right: 0; }
.pnav .reload svg { width: 14px; height: 16px; }

/* status bar */
.status {
  flex: none;
  display: flex;
  align-items: center;
  gap: 9px;
  height: 21px;
  padding: 2px 18px 0 4px;
  color: #fff;
  background: linear-gradient(90deg, #6f936f, #8ba688 22%, #b5c7b5 54%, #d0dacf 75%, #f4f4f4 90%);
}
.user { margin-left: auto; color: #000; }
.status svg { width: 14px; height: 14px; }
```
